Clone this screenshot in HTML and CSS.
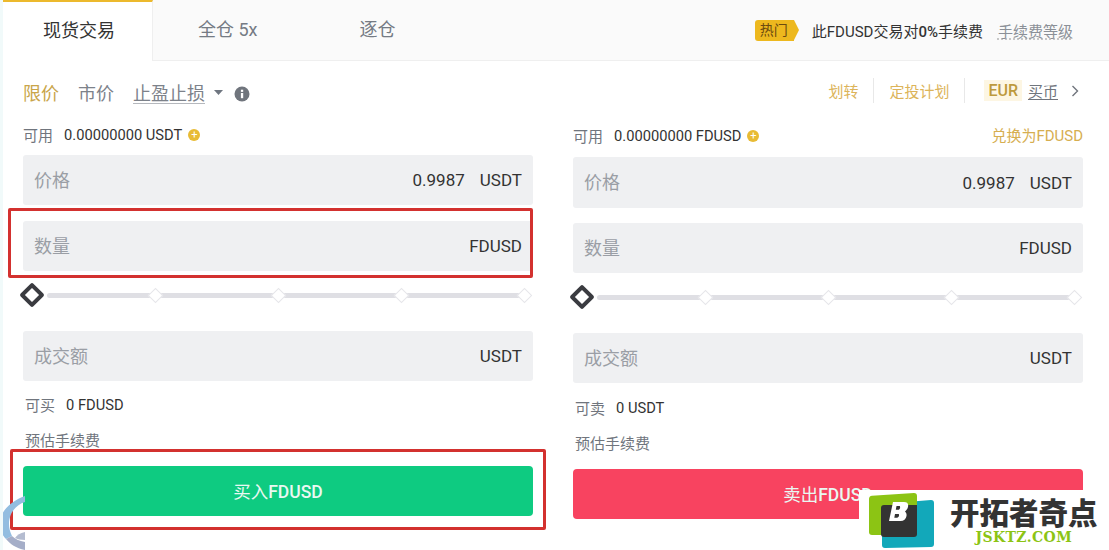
FILE: index.html
```html
<!DOCTYPE html>
<html lang="zh">
<head>
<meta charset="utf-8">
<title>现货交易</title>
<link rel="stylesheet" href="styles.css">
</head>
<body>
<div class="page">
  <div class="tabs">
    <div class="tab active">现货交易</div>
    <div class="tab margin">全仓 5x</div>
    <div class="tab iso">逐仓</div>
    <div class="promo">
      <span class="hot">热门</span>
      <span class="promo-text">此FDUSD交易对<b>0%</b>手续费</span>
      <span class="fee-link">手续费等级</span>
    </div>
  </div>
  <div class="toolbar">
    <span class="type on">限价</span>
    <span class="type">市价</span>
    <span class="type stop">止盈止损</span>
    <svg class="caret" width="9" height="5" viewBox="0 0 9 5"><path d="M0 0h9L4.5 5z" fill="#6f7680"/></svg>
    <svg class="info" width="16" height="16" viewBox="0 0 16 16"><circle cx="8" cy="8" r="7.5" fill="#70757d"/><rect x="6.9" y="7" width="2.3" height="5.2" fill="#fff"/><rect x="6.9" y="3.7" width="2.3" height="2.2" fill="#fff"/></svg>
    <div class="tools">
      <span class="gold">划转</span>
      <i class="sep"></i>
      <span class="gold">定投计划</span>
      <i class="sep"></i>
      <span class="eur">EUR</span>
      <span class="buycoin">买币</span>
      <svg class="chev" width="8" height="12" viewBox="0 0 8 12"><path d="M1.5 1l5 5-5 5" fill="none" stroke="#70757d" stroke-width="1.4"/></svg>
    </div>
  </div>
  <div class="cols">
    <section class="col">
      <div class="avail"><span class="lbl">可用</span><span class="val">0.00000000 USDT</span><span class="plus">+</span></div>
      <div class="field"><span class="ph">价格</span><span class="num">0.9987</span><span class="unit">USDT</span></div>
      <div class="field"><span class="ph">数量</span><span class="unit">FDUSD</span></div>
      <div class="slider"><i class="handle"></i><i class="dot d1"></i><i class="dot d2"></i><i class="dot d3"></i><i class="dot d4"></i></div>
      <div class="field"><span class="ph">成交额</span><span class="unit">USDT</span></div>
      <div class="meta"><span class="lbl">可买</span><span class="val">0 FDUSD</span></div>
      <div class="fee">预估手续费</div>
      <button class="btn buy">买入<b>FDUSD</b></button>
    </section>
    <section class="col right">
      <div class="avail"><span class="lbl">可用</span><span class="val">0.00000000 FDUSD</span><span class="plus">+</span><span class="convert">兑换为FDUSD</span></div>
      <div class="field"><span class="ph">价格</span><span class="num">0.9987</span><span class="unit">USDT</span></div>
      <div class="field"><span class="ph">数量</span><span class="unit">FDUSD</span></div>
      <div class="slider"><i class="handle"></i><i class="dot d1"></i><i class="dot d2"></i><i class="dot d3"></i><i class="dot d4"></i></div>
      <div class="field"><span class="ph">成交额</span><span class="unit">USDT</span></div>
      <div class="meta"><span class="lbl">可卖</span><span class="val">0 USDT</span></div>
      <div class="fee">预估手续费</div>
      <button class="btn sell">卖出<b>FDUSD</b></button>
    </section>
  </div>
  <i class="mark mark-qty"></i>
  <i class="mark mark-btn"></i>
  <svg class="swirl" width="26" height="54" viewBox="0 0 26 54">
    <path d="M25 0C9 6 0 16 0 28c0 6 2 11 6 15l6-3c-2-4-3-8-3-12C9 18 15 9 25 6z" fill="#93bde0"/>
    <path d="M6 43c4 5 10 9 19 11v-8c-6-1-10-3-13-6z" fill="#a5aec8"/>
    <path d="M25 36c-5 1-8 3-10 6 2 1 6 2 10 2z" fill="#b4bcd0"/>
  </svg>
  <div class="logo">
    <svg class="logo-mark" width="66" height="56" viewBox="0 0 66 56">
      <path d="M13 11L62 7q3 0 3 3v41q0 3-3 3l-46 1q-3 0-3-3z" fill="#12a8ba"/>
      <path d="M0 6q0-3 3-3.300L45 0q3 0 3 3v36q0 3-3 3L3 42q-3 0-3-3z" fill="#8cc414"/>
      <path d="M15 12h33v29q0 3-3 3H15q-3 0-3-3V15q0-3 3-3z" fill="#333"/>
      <path d="M24 9h11q5 0 4 5-1 3-3 4.500 2 1.500 1.500 4.500-1 5-6 5H20z" fill="#fff"/>
      <path d="M27.500 13l-.7 3.800h3q2-1.500 1-3.800zM26 21l-.7 3.800h3q2.500-1.500 1.500-3.800z" fill="#333"/>
    </svg>
    <div class="logo-text">
      <div class="logo-cn">开拓者奇点</div>
      <div class="logo-en">JSKTZ.COM</div>
    </div>
  </div>
</div>
</body>
</html>
```
FILE: styles.css
```css
* { box-sizing: border-box; }
html, body { margin: 0; padding: 0; background: #fff; }
body { font-family: Roboto, "Noto Sans CJK SC", sans-serif; color: #333; }
i { display: block; font-style: normal; }
.page { position: relative; width: 1109px; height: 550px; overflow: hidden; border-left: 3px solid #f1fafa; }

.tabs { display: flex; align-items: center; height: 61px; background: #fafafa; border-bottom: 1px solid #efefef; padding-right: 36px; }
.tab { font-size: 18px; color: #757b84; line-height: 60px; }
.tab.active { width: 150px; height: 61px; background: #fff; color: #333; border-top: 2px solid #ecb92d; border-right: 1px solid #efefef; padding-left: 40px; line-height: 58px; }
.tab.margin { margin-left: 45px; }
.tab.iso { margin-left: 102px; }
.promo { margin-left: auto; display: flex; align-items: center; }
.hot { position: relative; width: 39px; height: 21px; background: #edb81e; color: #6b4a10; border-radius: 3px 0 0 3px; font-size: 14px; line-height: 21px; padding-left: 5px; }
.hot::after { content: ""; position: absolute; left: 39px; top: 0; border-left: 5px solid #edb81e; border-top: 10.500px solid transparent; border-bottom: 10.500px solid transparent; }
.promo-text { margin-left: 18px; font-size: 15px; color: #333; }
.promo-text b { font-weight: 500; }
.fee-link { margin-left: 15px; font-size: 15px; color: #8b9097; text-decoration: underline dotted #b5b5b5; text-underline-offset: 2px; }

.toolbar { display: flex; align-items: center; height: 62px; padding: 0 30px 0 20px; }
.type { font-size: 18px; color: #7d828a; margin-right: 19px; }
.type.on { color: #c9a54a; }
.type.stop { margin-right: 9px; text-decoration: underline 1px #b5b8bd; text-underline-offset: 3px; }
.caret { margin-right: 11px; }
.info { margin-top: 3px; }
.tools { margin-left: auto; margin-bottom: 3px; display: flex; align-items: center; font-size: 15px; }
.gold { color: #dcb45a; }
.sep { width: 1px; height: 25px; background: #e8e8e8; margin: 0 15px; }
.eur { background: #fdf6e3; color: #bd9a3d; font-weight: 500; font-size: 16px; padding: 0 4px; margin-left: 4px; line-height: 21px; }
.buycoin { color: #70757d; margin-left: 6px; text-decoration: underline; text-underline-offset: 2px; }
.chev { margin-left: 13px; }

.cols { display: flex; gap: 40px; padding-left: 20px; height: 479px; border-bottom: 1px solid #f3f3f3; }
.col { width: 510px; display: flex; flex-direction: column; }
.col.right { padding-top: 1px; }
.avail { display: flex; align-items: center; height: 24px; font-size: 14.700px; }
.lbl { color: #70757d; font-size: 15px; margin-bottom: 2px; }
.val { margin-left: 11px; color: #333; }
.plus { width: 12px; height: 12px; border-radius: 50%; background: #e8bb35; color: #fff; font-size: 11px; line-height: 12px; text-align: center; margin-left: 6px; }
.convert { margin-left: auto; margin-bottom: 3px; color: #d6ae50; font-size: 15px; }
.field { display: flex; align-items: center; height: 50px; margin-top: 8px; padding: 0 11px; background: #eff0f2; border-radius: 3px; font-size: 17px; }
.field + .field { margin-top: 16px; }
.avail + .field { margin-top: 8px; }
.right .avail + .field { margin-top: 9px; height: 51px; }
.right .field + .field { margin-top: 15px; }
.ph { color: #9a9ea5; font-size: 18px; margin-right: auto; padding-bottom: 3px; }
.num { color: #333; margin-right: 15px; }
.unit { color: #333; }
.slider { position: relative; height: 5px; margin: 22px 0 25px 24px; width: 477px; background: #dfdfe4; border-radius: 3px; }
.handle { position: absolute; left: -24px; top: -7px; width: 18px; height: 18px; background: #fff; border: 4px solid #3a3b40; transform: rotate(45deg); border-radius: 2px; }
.dot { position: absolute; top: -3px; width: 11px; height: 11px; background: #fff; border: 1px solid #e6e6ea; transform: rotate(45deg); }
.d1 { left: 103px; }
.d2 { left: 226px; }
.d3 { left: 349px; }
.d4 { left: 472px; }
.meta { display: flex; align-items: center; font-size: 14.700px; margin: 14px 0 0 2px; height: 20px; }
.right .meta { margin-top: 15px; }
.fee { font-size: 15px; color: #70757d; margin: 16px 0 0 2px; height: 20px; line-height: 20px; }
.btn { display: block; width: 510px; height: 50px; margin-top: 15px; padding: 0 0 2px; border: 0; border-radius: 4px; color: #e9f8f2; font: 17.500px Roboto, "Noto Sans CJK SC", sans-serif; }
.btn b { font-weight: 500; }
.buy { background: #0ecb81; }
.sell { background: #f84360; }

.mark { position: absolute; border: 3px solid #d3312f; border-radius: 2px; }
.mark-qty { left: 5px; top: 208px; width: 525px; height: 70px; }
.mark-btn { left: 7px; top: 449px; width: 536px; height: 81px; }
.swirl { position: absolute; left: -3px; top: 496px; }

.logo { position: absolute; left: 856px; top: 490px; width: 250px; height: 60px; background: #fff; display: flex; align-items: flex-start; padding: 3px 0 0 10px; }
.logo-mark { flex: none; }
.logo-text { margin-left: 15px; }
.logo-cn { font: 900 29.500px/30px "Noto Sans CJK SC", sans-serif; color: #333; margin-top: 3px; }
.logo-en { font: 700 14px/18px "DejaVu Serif", serif; color: #8cc414; text-align: center; letter-spacing: 0.400px; margin-top: 2px; }
```
